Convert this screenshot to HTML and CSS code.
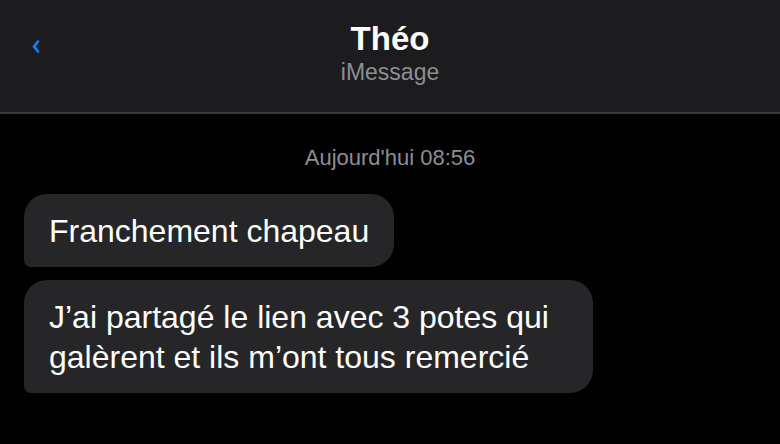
FILE: index.html
```html
<!DOCTYPE html>
<html lang="fr">
<head>
	<meta charset="UTF-8">
	<meta name="viewport" content="width=device-width, initial-scale=1.0">
	<title>Théo – iMessage</title>
	<link rel="stylesheet" href="styles.css">
</head>
<body>
	<header class="nav-bar">
		<a class="back-button" href="#" aria-label="Retour">
			<svg width="8" height="13" viewBox="0 0 8 13">
				<polyline points="6,1.5 2,6.5 6,11.5" fill="none" stroke="#0a84ff" stroke-width="2.6" stroke-linecap="round" stroke-linejoin="round"/>
			</svg>
		</a>
		<div class="contact">
			<div class="contact-name">Théo</div>
			<div class="contact-service">iMessage</div>
		</div>
		<div></div>
	</header>

	<main class="thread">
		<div class="timestamp">Aujourd'hui 08:56</div>

		<div class="message-list">
			<div class="bubble">Franchement chapeau</div>
			<div class="bubble">J’ai partagé le lien avec 3 potes qui galèrent et ils m’ont tous remercié</div>
		</div>
	</main>
</body>
</html>
```

FILE: styles.css
```css
:root {
	--bar-background: #1c1c1e;
	--bar-border: #3a3a3c;
	--bubble-background: #262628;
	--secondary-text: #8e8e93;
	--accent: #0a84ff;
}

* {
	box-sizing: border-box;
}

html,
body {
	height: 100%;
}

body {
	margin: 0;
	background: #000;
	color: #fff;
	font-family: "Liberation Sans", Arial, Helvetica, sans-serif;
	overflow: hidden;
}

.nav-bar {
	display: grid;
	grid-template-columns: 1fr auto 1fr;
	height: 114px;
	padding-top: 19px;
	background: var(--bar-background);
	border-bottom: 2px solid var(--bar-border);
}

.back-button {
	display: flex;
	align-self: start;
	margin: 21px 0 0 32px;
	width: 8px;
	height: 13px;
}

.contact {
	text-align: center;
}

.contact-name {
	font-size: 33px;
	font-weight: bold;
	line-height: 40px;
}

.contact-service {
	font-size: 23px;
	line-height: 26px;
	color: var(--secondary-text);
}

.thread {
	padding: 31px 24px 0;
}

.timestamp {
	text-align: center;
	font-size: 22px;
	line-height: 26px;
	color: var(--secondary-text);
}

.message-list {
	display: flex;
	flex-direction: column;
	align-items: flex-start;
	gap: 13px;
	margin-top: 23px;
}

.bubble {
	max-width: 569px;
	padding: 16.5px 25px;
	font-size: 32px;
	line-height: 40px;
	background: var(--bubble-background);
	border-radius: 23px 23px 23px 7px;
}
```
